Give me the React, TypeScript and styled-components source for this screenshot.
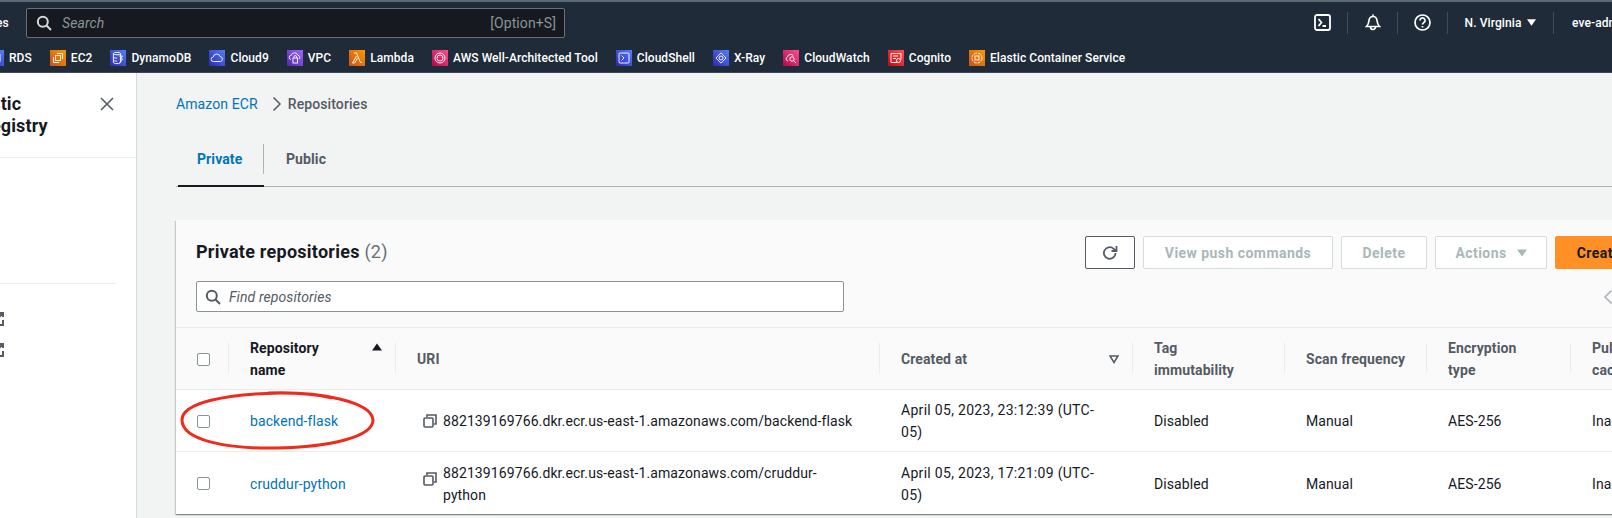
import React from 'react'
import styled, { createGlobalStyle } from 'styled-components'

const GlobalStyle = createGlobalStyle`
  html, body {
    margin: 0;
    padding: 0;
    background: #f2f3f3;
    overflow: hidden;
  }
  * {
    box-sizing: border-box;
  }
`

const font = `Roboto, "Liberation Sans", Arial, sans-serif`
const ink = '#16191f'
const grey = '#545b64'
const blue = '#0073bb'
const line = '#eaeded'
const disabled = '#aab7b8'

const Page = styled.div`
  width: 1612px;
  height: 518px;
  overflow: hidden;
  font-family: ${font};
  font-size: 14px;
  letter-spacing: 0.1px;
  color: ${ink};
  position: relative;
`

/* top navigation */
const Nav = styled.header`
  height: 73px;
  background: #1f2b38;
  border-top: 2px solid #5b6b78;
  border-bottom: 1px solid #3c4856;
  color: #fff;
`

const NavTop = styled.div`
  height: 41px;
  display: flex;
  align-items: center;
`

const Services = styled.span`
  width: 26px;
  flex: none;
  font-size: 12px;
  font-weight: 500;
  text-indent: -38px;
  white-space: nowrap;
  overflow: hidden;
`

const SearchBox = styled.div`
  width: 539px;
  height: 30px;
  flex: none;
  display: flex;
  align-items: center;
  gap: 10px;
  padding: 0 8px 0 9px;
  background: #16191f;
  border: 1px solid #687078;
  border-radius: 2px;
  font-size: 14px;
  color: #879596;
`

const SearchHint = styled.span`
  font-style: italic;
`

const Shortcut = styled.span`
  margin-left: auto;
`

const NavRight = styled.div`
  margin-left: auto;
  width: 314px;
  flex: none;
  display: flex;
  align-items: center;
  height: 22px;
  font-size: 12px;
  font-weight: 500;
  overflow: hidden;
  white-space: nowrap;
`

const NavCell = styled.div<{ $width: number }>`
  width: ${({ $width }) => $width}px;
  height: 22px;
  flex: none;
  display: flex;
  align-items: center;
  justify-content: center;
  gap: 6px;
  border-right: 1px solid #414d5c;
`

const UserCell = styled.div`
  padding-left: 18px;
`

const Bookmarks = styled.nav`
  height: 29px;
  display: flex;
  align-items: center;
  gap: 18px;
  margin-left: -12px;
  font-size: 12px;
  font-weight: 500;
  letter-spacing: 0.06px;
  white-space: nowrap;
`

const Bookmark = styled.div`
  display: flex;
  align-items: center;
  gap: 5px;
`

/* side panel and main column */
const Body = styled.div`
  display: flex;
  height: 445px;
`

const Side = styled.aside`
  width: 137px;
  flex: none;
  background: #fff;
  border-right: 1px solid #d5dbdb;
  overflow: hidden;
`

const SideHead = styled.div`
  height: 85px;
  border-bottom: 1px solid ${line};
  display: flex;
  justify-content: space-between;
  padding: 20px 22px 0 0;
`

const SideTitle = styled.div`
  margin-left: -105px;
  font-size: 18px;
  font-weight: 700;
  line-height: 22px;
  white-space: nowrap;
`

const CloseButton = styled.div`
  padding-top: 4px;
  display: flex;
`

const SideBody = styled.div`
  height: 126px;
  border-bottom: 1px solid ${line};
  margin-right: 20px;
`

const SideLinks = styled.div`
  display: flex;
  flex-direction: column;
  gap: 15px;
  padding-top: 27px;
  margin-left: -11px;
`

const Main = styled.main`
  flex: 1;
  min-width: 0;
  padding-left: 39px;
`

const Crumbs = styled.div`
  height: 62px;
  display: flex;
  align-items: center;
  font-size: 14px;
`

const CrumbLink = styled.span`
  color: ${blue};
`

const CrumbCurrent = styled.span`
  color: ${grey};
  font-weight: 500;
`

const CrumbSep = styled.span`
  width: 39px;
  display: flex;
  justify-content: center;
  margin-right: -9px;
`

const Tabs = styled.div`
  display: flex;
  height: 52px;
  border-bottom: 1px solid #aab7b8;
`

const Tab = styled.div<{ $active?: boolean }>`
  position: relative;
  width: ${({ $active }) => ($active ? 86 : 90)}px;
  padding-top: 13px;
  padding-left: ${({ $active }) => ($active ? 19 : 22)}px;
  margin-left: ${({ $active }) => ($active ? 2 : 0)}px;
  line-height: 22px;
  font-weight: 700;
  color: ${({ $active }) => ($active ? blue : grey)};
  border-bottom: ${({ $active }) => ($active ? `2px solid ${ink}` : 'none')};
  height: ${({ $active }) => ($active ? 52 : 51)}px;

  &::after {
    content: ${({ $active }) => ($active ? "''" : 'none')};
    position: absolute;
    right: 0;
    top: 9px;
    width: 1px;
    height: 30px;
    background: #aab7b8;
  }
`

/* repositories card */
const Card = styled.section`
  position: relative;
  width: 1559px;
  height: 294px;
  margin-top: 33px;
  background: #fafafa;
  box-shadow: 0 1px 1px 0 rgba(0, 28, 36, 0.3), 1px 1px 1px 0 rgba(0, 28, 36, 0.15),
    -1px 1px 1px 0 rgba(0, 28, 36, 0.15);
`

const CardHead = styled.div`
  height: 108px;
  padding: 16px 20px 0 20px;
  border-bottom: 1px solid ${line};
`

const TitleRow = styled.div`
  display: flex;
  align-items: center;
  justify-content: space-between;
  height: 33px;
`

const Title = styled.h2`
  margin: 0 0 2px;
  font-size: 18px;
  font-weight: 700;
  line-height: 22px;
  letter-spacing: 0.25px;
`

const Count = styled.span`
  font-weight: 400;
  color: #687078;
`

const Actions = styled.div`
  display: flex;
  gap: 8px;
`

const Button = styled.button<{ $kind?: 'icon' | 'primary'; $width: number }>`
  width: ${({ $width }) => $width}px;
  height: 33px;
  display: flex;
  align-items: center;
  justify-content: center;
  gap: 10px;
  background: ${({ $kind }) => ($kind === 'primary' ? '#ff9025' : '#fff')};
  border: 1px solid
    ${({ $kind }) => ($kind === 'icon' ? grey : $kind === 'primary' ? '#ff9025' : '#d5dbdb')};
  border-radius: 2px;
  font-family: inherit;
  font-size: 14px;
  font-weight: 700;
  letter-spacing: 0.45px;
  color: ${({ $kind }) => ($kind === 'primary' ? ink : disabled)};
  padding: 0;
  white-space: nowrap;
`

const FilterRow = styled.div`
  display: flex;
  justify-content: space-between;
  margin-top: 12px;
`

const FilterBox = styled.div`
  width: 648px;
  height: 31px;
  display: flex;
  align-items: center;
  gap: 8px;
  padding: 0 8px;
  background: #fff;
  border: 1px solid #879596;
  border-radius: 2px;
  font-style: italic;
  color: ${grey};
`

const Pager = styled.div`
  width: 112px;
  height: 31px;
  display: flex;
  align-items: center;
`

const Table = styled.table`
  width: 100%;
  table-layout: fixed;
  border-collapse: collapse;
`

const HeadRow = styled.tr`
  height: 61px;
  border-bottom: 1px solid ${line};
`

const HeadCell = styled.th<{ $dark?: boolean; $width: number }>`
  position: relative;
  width: ${({ $width }) => $width}px;
  padding: 2px 21px 0;
  text-align: left;
  font-size: 14px;
  font-weight: 700;
  line-height: 22px;
  color: ${({ $dark }) => ($dark ? ink : grey)};

  &::after {
    content: '';
    position: absolute;
    right: 0;
    top: 15px;
    width: 1px;
    height: 30px;
    background: ${line};
  }
`

const SortMark = styled.span`
  position: absolute;
  right: 14px;
  top: 14px;
  display: flex;
`

const HeadLabel = styled.div`
  width: 90px;
`

const Row = styled.tr<{ $height: number }>`
  height: ${({ $height }) => $height}px;
  background: #fff;
  border-bottom: 1px solid ${line};

  &:last-child {
    border-bottom: none;
  }
`

const Cell = styled.td`
  padding: 2px 21px 0;
  line-height: 22px;
  vertical-align: middle;
`

const Check = styled.span`
  display: block;
  width: 13px;
  height: 13px;
  background: #fff;
  border: 1px solid #879596;
  border-radius: 2px;
`

const RepoLink = styled.a`
  color: ${blue};
`

const UriWrap = styled.div`
  display: flex;
  align-items: center;
  gap: 6px;
  padding-left: 6px;
`

const CopySlot = styled.span<{ $lift: number }>`
  display: flex;
  flex: none;
  margin-bottom: ${({ $lift }) => $lift}px;
`

const UriText = styled.span`
  width: 412px;
  flex: none;
`

const DateText = styled.div`
  width: 210px;
  letter-spacing: 0.3px;
`

const Annotation = styled.svg`
  position: absolute;
  left: 4px;
  top: 170px;
  pointer-events: none;
`

type Mark = { name: string; from: string; to: string; glyph: React.ReactNode; id: string }

const stroke = { fill: 'none', stroke: '#fff', strokeWidth: 0.9 }

const BookmarkIcon = ({ mark }: { mark: Mark }) => (
  <svg width="16" height="16" viewBox="0 0 16 16" style={{ flex: 'none' }}>
    <defs>
      <linearGradient id={mark.id} x1="0" y1="1" x2="1" y2="0">
        <stop offset="0" stopColor={mark.from} />
        <stop offset="1" stopColor={mark.to} />
      </linearGradient>
    </defs>
    <rect width="16" height="16" fill={`url(#${mark.id})`} />
    <g {...stroke}>{mark.glyph}</g>
  </svg>
)

const orange = ['#c8511b', '#ff9900']
const indigo = ['#2e27ad', '#527fff']
const pink = ['#b0084d', '#ff4f8b']
const purple = ['#4d27a8', '#a166ff']
const red = ['#bd0816', '#ff5252']

const marks: Mark[] = [
  { id: 'b0', name: 'RDS', from: indigo[0], to: indigo[1], glyph: <><ellipse cx="8" cy="4.5" rx="4" ry="1.5" /><path d="M4 4.5v7c0 1 1.8 1.6 4 1.6s4-.6 4-1.6v-7M4 8c0 1 1.8 1.6 4 1.6s4-.6 4-1.6" /></> },
  { id: 'b1', name: 'EC2', from: orange[0], to: orange[1], glyph: <><rect x="5.5" y="5.5" width="5" height="5" /><path d="M7 3.5h5.5V9M3.500 7v5.500H9" /></> },
  { id: 'b2', name: 'DynamoDB', from: indigo[0], to: indigo[1], glyph: <><ellipse cx="7" cy="3.6" rx="3.6" ry="1.2" /><path d="M3.4 3.6v8.8c0 .7 1.6 1.2 3.6 1.2s3.6-.5 3.6-1.2V3.6M3.4 7c0 .7 1.6 1.2 3.6 1.2M3.4 10c0 .7 1.6 1.2 3.6 1.2M9.5 6h3l-2 3h2l-3 4" /></> },
  { id: 'b3', name: 'Cloud9', from: indigo[0], to: indigo[1], glyph: <path d="M4.5 11.5a2.2 2.2 0 0 1-.3-4.4 3.6 3.6 0 0 1 7-.5 2.5 2.5 0 0 1 .4 4.9z" /> },
  { id: 'b4', name: 'VPC', from: purple[0], to: purple[1], glyph: <><path d="M4 9.5a2 2 0 0 1 .2-4 3.4 3.4 0 0 1 6.6-.3 2.2 2.2 0 0 1 1.2 3.9" /><rect x="6" y="8" width="4.5" height="5" /><path d="M7 8V6.8a1.2 1.2 0 0 1 2.5 0V8" /></> },
  { id: 'b5', name: 'Lambda', from: orange[0], to: orange[1], glyph: <path d="M5 3h2.500l4 9.500H13M7.500 6L3.500 13h2l3-4.800" /> },
  { id: 'b6', name: 'AWS Well-Architected Tool', from: pink[0], to: pink[1], glyph: <><circle cx="8" cy="8" r="5" /><circle cx="8" cy="8" r="3" /></> },
  { id: 'b7', name: 'CloudShell', from: indigo[0], to: indigo[1], glyph: <><rect x="3" y="3" width="10" height="10" rx="1" /><path d="M5.500 5.500L8 8l-2.500 2.500" /></> },
  { id: 'b8', name: 'X-Ray', from: indigo[0], to: indigo[1], glyph: <><path d="M8 2.800L13 8l-5 5.200L3 8z" /><circle cx="8" cy="8" r="2" /></> },
  { id: 'b9', name: 'CloudWatch', from: pink[0], to: pink[1], glyph: <><path d="M5 11a2.200 2.200 0 0 1-.5-4.200A3.300 3.300 0 0 1 10.500 6" /><circle cx="9" cy="9" r="2.200" /><path d="M10.600 10.600L13 13" /></> },
  { id: 'b10', name: 'Cognito', from: red[0], to: red[1], glyph: <><path d="M3 3.500h10v6M3 3.500v9h6" /><circle cx="10.500" cy="10.500" r="2" /><path d="M5 6h5M5 8.500h3" /></> },
  { id: 'b11', name: 'Elastic Container Service', from: orange[0], to: orange[1], glyph: <><circle cx="8" cy="8" r="5" strokeDasharray="3 1" /><rect x="6" y="6" width="4" height="4" /></> },
]

const ExternalLink = () => (
  <svg width="16" height="16" viewBox="0 0 16 16" fill="none" stroke={grey} strokeWidth="2">
    <path d="M7 2H2v12h12V9M10 2h4v4M14 2L8 8" />
  </svg>
)

const CopyIcon = () => (
  <svg width="14" height="14" viewBox="0 0 14 14" fill="none" stroke={grey} strokeWidth="1.6">
    <rect x="1" y="4" width="9" height="9" rx="1" />
    <path d="M4 3V1h9v9h-2" />
  </svg>
)

const SearchIcon = ({ color }: { color: string }) => (
  <svg width="16" height="16" viewBox="0 0 16 16" fill="none" stroke={color} strokeWidth="2" style={{ flex: 'none' }}>
    <circle cx="6.8" cy="6.8" r="5" />
    <path d="M10.500 10.500L15 15" />
  </svg>
)

const Caret = ({ color, size = 9, up = false }: { color: string; size?: number; up?: boolean }) => (
  <svg width={size} height={size} viewBox="0 0 10 10">
    <path d={up ? 'M0 8.500h10L5 1.500z' : 'M0 1.500h10L5 8.500z'} fill={color} />
  </svg>
)

const TextHeads = [
  { label: 'Tag immutability', width: 152, narrow: true },
  { label: 'Scan frequency', width: 142, narrow: false },
  { label: 'Encryption type', width: 144, narrow: true },
  { label: 'Pull through cache', width: 164, narrow: true },
]

const repositories = [
  {
    name: 'backend-flask',
    uri: '882139169766.dkr.ecr.us-east-1.amazonaws.com/backend-flask',
    time: '23:12:39',
    height: 62,
    lift: 0,
  },
  {
    name: 'cruddur-python',
    uri: '882139169766.dkr.ecr.us-east-1.amazonaws.com/cruddur-python',
    time: '17:21:09',
    height: 63,
    lift: 9,
  },
]

const App: React.FunctionComponent = () => {
  return (
    <Page>
      <GlobalStyle />
      <Nav>
        <NavTop>
          <Services>Services</Services>
          <SearchBox>
            <SearchIcon color="#d5dbdb" />
            <SearchHint>Search</SearchHint>
            <Shortcut>[Option+S]</Shortcut>
          </SearchBox>
          <NavRight>
            <NavCell $width={50}>
              <svg width="17" height="17" viewBox="0 0 17 17" fill="none" stroke="#fff" strokeWidth="1.8">
                <rect x="1" y="1" width="15" height="15" rx="2" />
                <path d="M4.500 5l3 3.500-3 3.500M8.500 12h3.500" />
              </svg>
            </NavCell>
            <NavCell $width={50}>
              <svg width="16" height="17" viewBox="0 0 16 17" fill="none" stroke="#fff" strokeWidth="1.7">
                <path d="M1.500 12.500h13c-1.500-1.500-2.200-3-2.500-6-.3-2.500-2-4-4-4s-3.700 1.500-4 4c-.3 3-1 4.500-2.500 6zM8 .5v2M5.500 13a2.500 2.500 0 0 0 5 0" />
              </svg>
            </NavCell>
            <NavCell $width={50}>
              <svg width="17" height="17" viewBox="0 0 17 17" fill="none" stroke="#fff" strokeWidth="1.7">
                <circle cx="8.500" cy="8.500" r="7.500" />
                <path d="M6 6.500a2.500 2.500 0 1 1 3.800 2.100c-.9.6-1.300 1-1.300 2M8.500 12v1.500" />
              </svg>
            </NavCell>
            <NavCell $width={106}>
              N. Virginia <Caret color="#fff" size={9} />
            </NavCell>
            <UserCell>eve-admin</UserCell>
          </NavRight>
        </NavTop>
        <Bookmarks>
          {marks.map((mark) => (
            <Bookmark key={mark.id}>
              <BookmarkIcon mark={mark} />
              {mark.name}
            </Bookmark>
          ))}
        </Bookmarks>
      </Nav>
      <Body>
        <Side>
          <SideHead>
            <SideTitle>
              Amazon Elastic
              <br />
              Container Registry
            </SideTitle>
            <CloseButton>
              <svg width="14" height="14" viewBox="0 0 14 14" stroke={grey} strokeWidth="1.600">
                <path d="M1 1l12 12M13 1L1 13" />
              </svg>
            </CloseButton>
          </SideHead>
          <SideBody />
          <SideLinks>
            <ExternalLink />
            <ExternalLink />
          </SideLinks>
        </Side>
        <Main>
          <Crumbs>
            <CrumbLink>Amazon ECR</CrumbLink>
            <CrumbSep>
              <svg width="10" height="16" viewBox="0 0 10 16" fill="none" stroke={grey} strokeWidth="1.500">
                <path d="M1.500 1.500L8 8l-6.500 6.500" />
              </svg>
            </CrumbSep>
            <CrumbCurrent>Repositories</CrumbCurrent>
          </Crumbs>
          <Tabs>
            <Tab $active>Private</Tab>
            <Tab>Public</Tab>
          </Tabs>
          <Card>
            <CardHead>
              <TitleRow>
                <Title>
                  Private repositories <Count>(2)</Count>
                </Title>
                <Actions>
                  <Button $kind="icon" $width={50}>
                    <svg width="16" height="16" viewBox="0 0 16 16" fill="none" stroke={grey} strokeWidth="1.800">
                      <path d="M13.500 8a5.800 5.800 0 1 1-2-4.400L14 6M14.500 1v5h-5" />
                    </svg>
                  </Button>
                  <Button $width={190}>View push commands</Button>
                  <Button $width={86}>Delete</Button>
                  <Button $width={112}>
                    Actions <Caret color={disabled} size={10} />
                  </Button>
                  <Button $kind="primary" $width={160}>
                    Create repository
                  </Button>
                </Actions>
              </TitleRow>
              <FilterRow>
                <FilterBox>
                  <SearchIcon color={grey} />
                  Find repositories
                </FilterBox>
                <Pager>
                  <svg width="10" height="16" viewBox="0 0 10 16" fill="none" stroke={disabled} strokeWidth="1.600">
                    <path d="M8.500 1.500L2 8l6.500 6.500" />
                  </svg>
                </Pager>
              </FilterRow>
            </CardHead>
            <Table>
              <thead>
                <HeadRow>
                  <HeadCell $width={53}>
                    <Check />
                  </HeadCell>
                  <HeadCell $width={167} $dark>
                    <HeadLabel>Repository name</HeadLabel>
                    <SortMark>
                      <Caret color={ink} size={10} up />
                    </SortMark>
                  </HeadCell>
                  <HeadCell $width={484}>URI</HeadCell>
                  <HeadCell $width={253}>
                    Created at
                    <SortMark>
                      <svg width="10" height="10" viewBox="0 0 10 10" fill="none" stroke={grey} strokeWidth="1.500" style={{ marginTop: 12 }}>
                        <path d="M1 2h8L5 8.500z" />
                      </svg>
                    </SortMark>
                  </HeadCell>
                  {TextHeads.map((head) => (
                    <HeadCell key={head.label} $width={head.width}>
                      {head.narrow ? <HeadLabel>{head.label}</HeadLabel> : head.label}
                    </HeadCell>
                  ))}
                </HeadRow>
              </thead>
              <tbody>
                {repositories.map((repo) => (
                  <Row key={repo.name} $height={repo.height}>
                    <Cell>
                      <Check />
                    </Cell>
                    <Cell>
                      <RepoLink>{repo.name}</RepoLink>
                    </Cell>
                    <Cell>
                      <UriWrap>
                        <CopySlot $lift={repo.lift}>
                          <CopyIcon />
                        </CopySlot>
                        <UriText>{repo.uri}</UriText>
                      </UriWrap>
                    </Cell>
                    <Cell>
                      <DateText>
                        April 05, 2023, {repo.time} (UTC-
                        <wbr />
                        05)
                      </DateText>
                    </Cell>
                    <Cell>Disabled</Cell>
                    <Cell>Manual</Cell>
                    <Cell>AES-256</Cell>
                    <Cell>Inactive</Cell>
                  </Row>
                ))}
              </tbody>
            </Table>
            <Annotation width="196" height="60" viewBox="0 0 196 60" fill="none">
              <path
                d="M88 3C140 1 192 12 193 30C193 47 150 57 96 58C46 59 2 50 2 30C2 13 44 4 100 3C120 3 140 5 152 8"
                stroke="#ef2b1d"
                strokeWidth="3"
              />
            </Annotation>
          </Card>
        </Main>
      </Body>
    </Page>
  )
}

export default App
